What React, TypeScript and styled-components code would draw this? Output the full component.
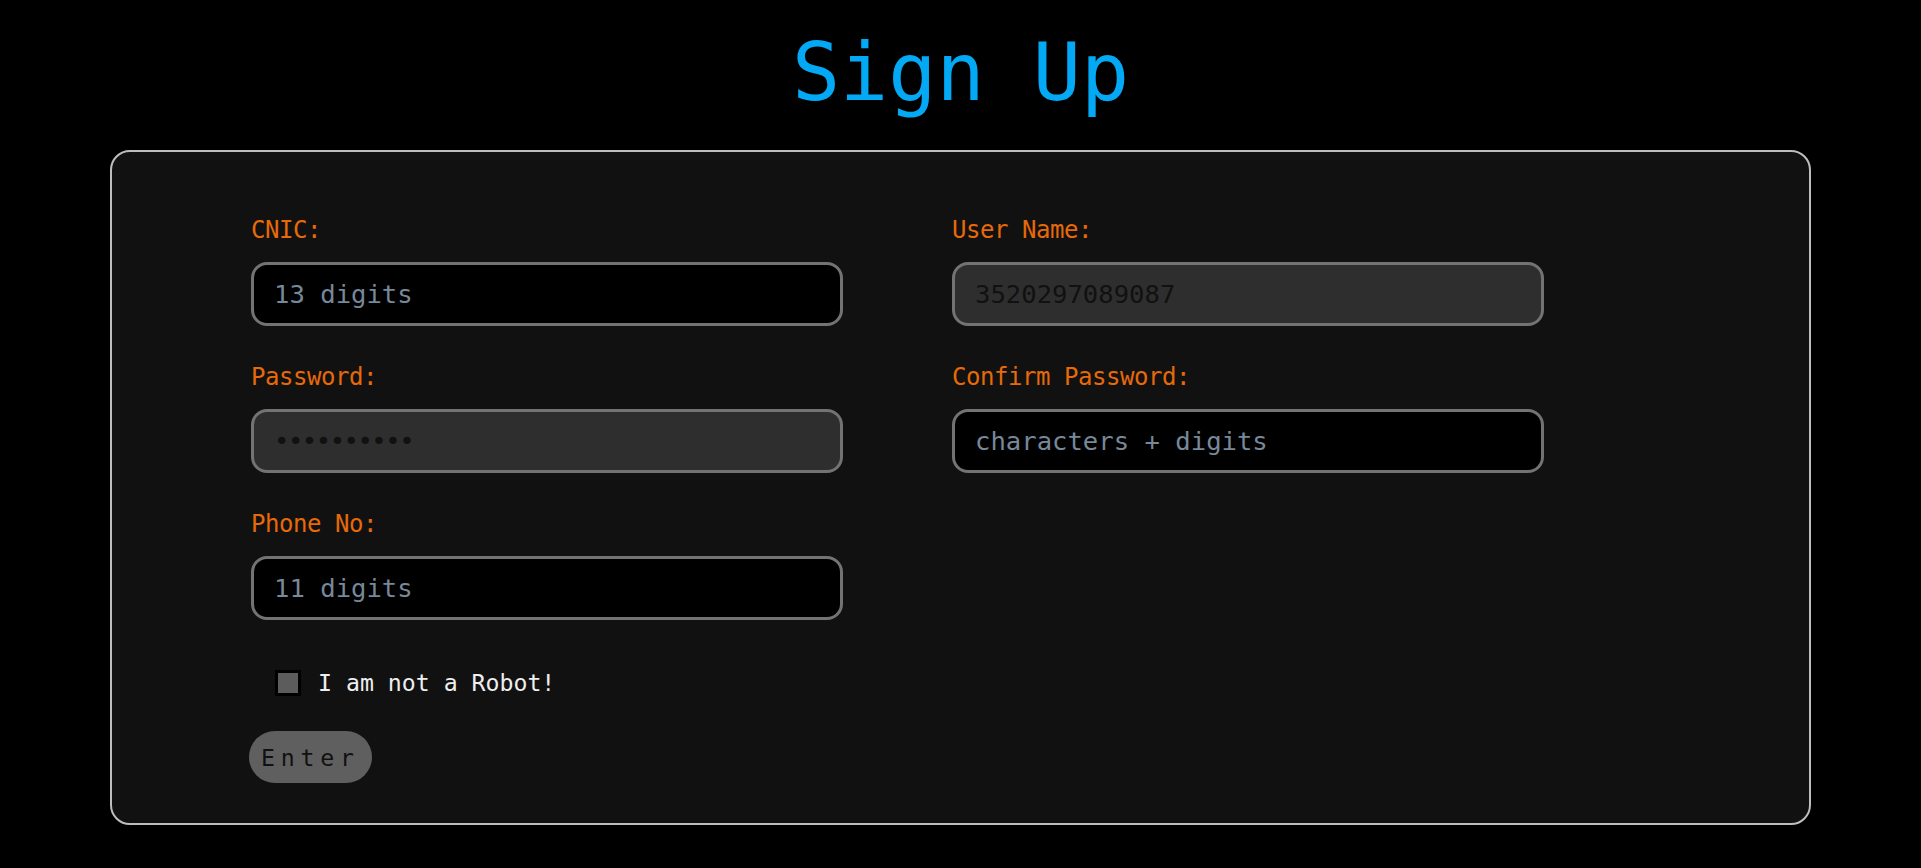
import React from "react";
import styled, { createGlobalStyle } from "styled-components";

const GlobalStyle = createGlobalStyle`
  html, body {
    margin: 0;
    padding: 0;
    background: #000;
  }
  body {
    font-family: "DejaVu Sans Mono", "Liberation Mono", monospace;
  }
  * { box-sizing: border-box; }
`;

const Page = styled.main`
  display: flex;
  flex-direction: column;
  align-items: stretch;
  padding: 26px 110px 30px;
`;

const Title = styled.h1`
  margin: 0 0 31px;
  text-align: center;
  font-family: "DejaVu Sans Mono", monospace;
  font-weight: normal;
  font-size: 80px;
  line-height: normal;
  color: #03a9f4;
`;

const Card = styled.form`
  display: flex;
  flex-direction: column;
  align-items: flex-start;
  background: #111;
  border: 2px solid #bdbdbd;
  border-radius: 20px;
  padding: 64px 139px 40px;
`;

const FieldGrid = styled.div`
  display: grid;
  grid-template-columns: 592px 592px;
  column-gap: 109px;
  row-gap: 37px;
`;

const Field = styled.div`
  display: flex;
  flex-direction: column;
  gap: 18px;
`;

const Label = styled.label`
  font-family: "DejaVu Sans Mono", monospace;
  font-size: 24px;
  letter-spacing: -0.45px;
  line-height: 28px;
  color: #e6690a;
`;

const Input = styled.input<{ $filled?: boolean }>`
  width: 592px;
  height: 64px;
  padding: 0 20px;
  border: 3px solid #737373;
  border-radius: 16px;
  background: ${(p) => (p.$filled ? "#2e2e2e" : "#000")};
  color: #111;
  font-family: "DejaVu Sans Mono", monospace;
  font-size: 25.6px;
  outline: none;
  &[type="password"] {
    letter-spacing: -1.5px;
  }
  &::placeholder {
    color: #778899;
    opacity: 1;
    letter-spacing: 0;
  }
`;

const CheckRow = styled.label`
  display: flex;
  align-items: center;
  gap: 17px;
  margin: 49px 0 0 24px;
  font-family: "DejaVu Sans Mono", monospace;
  font-size: 23.2px;
  line-height: 28px;
  color: #eeeeee;
`;

const CheckBox = styled.span`
  display: block;
  width: 26px;
  height: 26px;
  border: 3px solid #000;
  background: #5c5c5c;
`;

const EnterButton = styled.button`
  margin: 34px 0 0 -2px;
  height: 52px;
  padding: 0 12px;
  border: none;
  border-radius: 26px;
  background: #5f5f5f;
  color: #111;
  font-family: "DejaVu Sans Mono", monospace;
  font-size: 23.2px;
  letter-spacing: 5.8px;
  cursor: pointer;
`;

type FieldDef = {
  id: string;
  label: string;
  type: string;
  placeholder?: string;
  value?: string;
};

const fields: FieldDef[] = [
  { id: "cnic", label: "CNIC:", type: "text", placeholder: "13 digits" },
  { id: "user", label: "User Name:", type: "text", value: "3520297089087" },
  { id: "pass", label: "Password:", type: "password", value: "abcdefghij" },
  {
    id: "confirm",
    label: "Confirm Password:",
    type: "password",
    placeholder: "characters + digits",
  },
  { id: "phone", label: "Phone No:", type: "text", placeholder: "11 digits" },
];

export default function App() {
  return (
    <>
      <GlobalStyle />
      <Page>
        <Title>Sign Up</Title>
        <Card onSubmit={(e) => e.preventDefault()}>
          <FieldGrid>
            {fields.map((f) => (
              <Field key={f.id}>
                <Label htmlFor={f.id}>{f.label}</Label>
                <Input
                  id={f.id}
                  type={f.type}
                  placeholder={f.placeholder}
                  defaultValue={f.value}
                  $filled={!!f.value}
                />
              </Field>
            ))}
          </FieldGrid>
          <CheckRow>
            <CheckBox />
            I am not a Robot!
          </CheckRow>
          <EnterButton type="submit">Enter</EnterButton>
        </Card>
      </Page>
    </>
  );
}
